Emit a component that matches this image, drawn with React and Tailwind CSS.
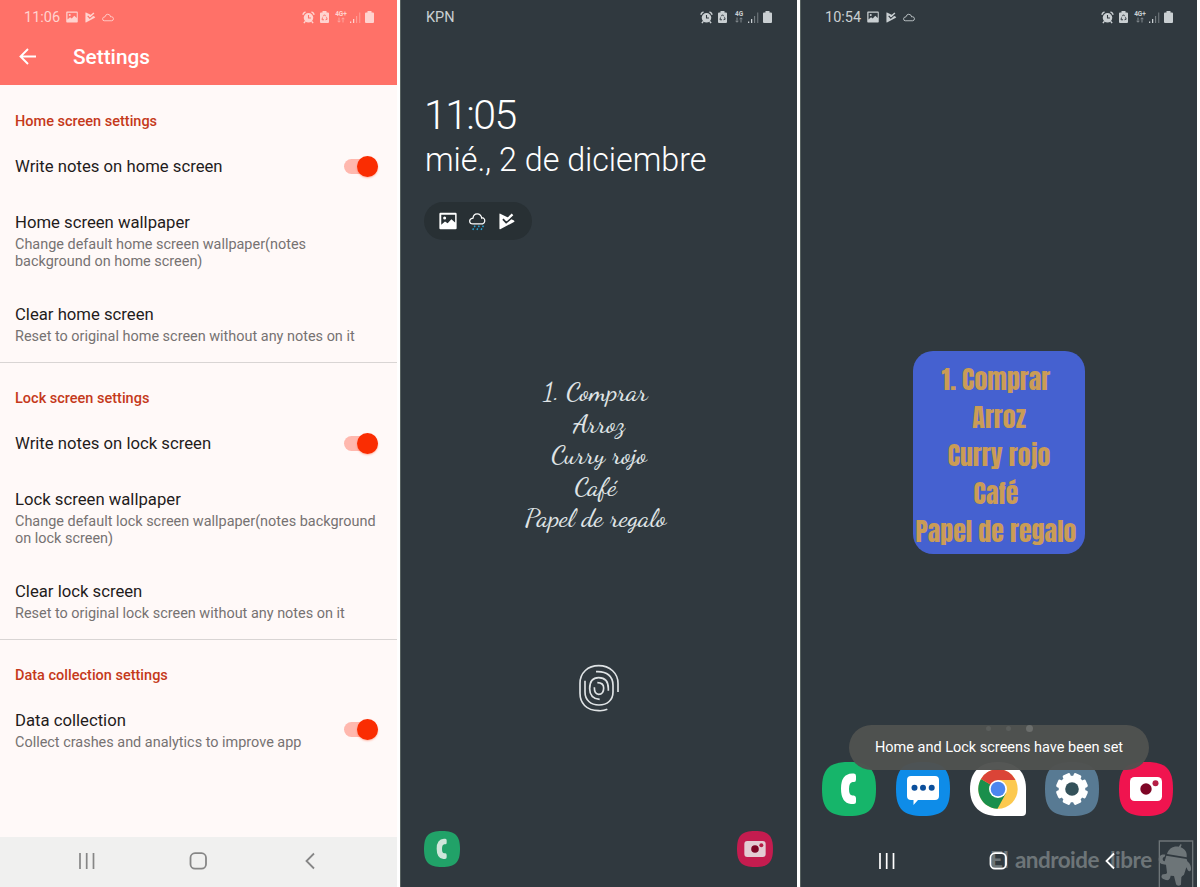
import React from "react";

function Picture({ className }) {
  return (
    <svg viewBox="0 0 24 24" className={className} fill="currentColor">
      <path fillRule="evenodd" d="M2 1H22Q23.500 1 23.500 2.500V21.500Q23.500 23 22 23H2Q.5 23 .5 21.500V2.500Q.5 1 2 1ZM3 3.500V17L8 12.500L11.500 15L16.500 9.500L21.500 14V3.500ZM7.500 6A2 2 0 1 1 7.500 10A2 2 0 1 1 7.500 6Z" />
    </svg>
  );
}

function PlayCheck({ className }) {
  return (
    <svg viewBox="0 0 24 24" className={className}>
      <path d="M2 1.500Q2 .5 3.200 1L22.500 10.500Q24 11.700 22.500 12.800L3.200 22.800Q2 23.200 2 22Z" fill="currentColor" />
      <path d="M7 8.500L11.500 13.500L24 2.500" fill="none" className="stroke-(--cut)" strokeWidth="2.600" />
      <path d="M10 7L12.500 9.500L20.500 2" fill="none" stroke="currentColor" strokeWidth="3.200" />
    </svg>
  );
}

function Cloud({ className }) {
  return (
    <svg viewBox="0 0 24 24" className={className} fill="none" stroke="currentColor" strokeWidth="1.600">
      <path d="M5 18H19A3.700 3.700 0 0 0 19 10.700Q17.500 10.500 17 11Q16 6 11.500 6Q7.500 6 6.500 10.700Q2 11 2 14.500Q2 18 5 18Z" />
    </svg>
  );
}

function RainCloud({ className }) {
  return (
    <svg viewBox="0 0 24 24" className={className} fill="none" stroke="currentColor" strokeWidth="1.500">
      <path d="M6 15.500H17.500A4 4 0 0 0 18.500 8.500Q17 8 16.500 8.500Q15.500 3.500 11 3.500Q6.500 3.500 6 8.500Q2 9 2 12Q2 15.500 6 15.500Z" />
      <path stroke="#2aa5d8" strokeWidth="1.700" strokeDasharray="2 1.800" d="M8.500 17.500L5.500 23M13.500 17.500L10.500 23M18.500 17.500L15.500 23" />
    </svg>
  );
}

function Alarm({ className }) {
  return (
    <svg viewBox="0 0 24 24" className={className} fill="none" stroke="currentColor">
      <circle cx="12" cy="12.500" r="8.800" fill="currentColor" stroke="none" />
      <path d="M1.500 7Q2.500 3 6.500 1.500M22.500 7Q21.500 3 17.500 1.500M6 19L3.500 22.500M18 19L20.500 22.500" strokeWidth="2.600" />
      <path className="stroke-(--cut)" d="M12 7.500V13H16.500" strokeWidth="2" />
    </svg>
  );
}

function BatterySaver({ className }) {
  return (
    <svg viewBox="0 0 18 24" className={className} fill="currentColor">
      <path d="M5 0H13V3H16Q18 3 18 5V22Q18 24 16 24H2Q0 24 0 22V5Q0 3 2 3H5Z" />
      <path className="stroke-(--cut)" fill="none" strokeWidth="1.900" d="M6.500 10.500L9 7.500L11.500 10.500M13 12.500L14.300 16.500L11 17.500M8 17.500H4L5 13" />
    </svg>
  );
}

function Signal({ className }) {
  return (
    <svg viewBox="0 0 22 22" className={className} fill="currentColor">
      <path d="M0 19H2.500V22H0ZM6 14H8.500V22H6Z" />
      <path opacity=".45" d="M12 8H14.300V22H12ZM18.500 1H20.500V22H18.500Z" />
    </svg>
  );
}

function Battery({ className }) {
  return (
    <svg viewBox="0 0 18 24" className={className} fill="currentColor">
      <path d="M5 0H13V3H16Q18 3 18 5V22Q18 24 16 24H2Q0 24 0 22V5Q0 3 2 3H5Z" />
    </svg>
  );
}

function Network({ label }) {
  return (
    <div className="flex w-[12px] flex-col items-center">
      <span className="text-[6.500px] leading-[6px] font-bold">{label}</span>
      <svg viewBox="0 0 16 12" className="h-[6px] w-[8px] opacity-60" fill="none" stroke="currentColor" strokeWidth="1.800">
        <path d="M4 1V10M1 7.500L4 10.500L7 7.500M12 11V2M9 4.500L12 1.500L15 4.500" />
      </svg>
    </div>
  );
}

function StatusBar({ label, icons, network, className }) {
  return (
    <div className={`flex h-[34px] shrink-0 items-center justify-between ${className}`}>
      <div className="flex items-center">
        <span className="w-[42px] pt-[2px] text-[14.500px] leading-4 whitespace-nowrap">{label}</span>
        {icons && (
          <>
            <Picture className="h-3 w-3" />
            <PlayCheck className="ml-[6px] h-[11px] w-3" />
            <Cloud className="ml-[5px] h-[13px] w-[14px]" />
          </>
        )}
      </div>
      <div className="flex items-center">
        <Alarm className="h-[13px] w-[13px]" />
        <BatterySaver className="ml-[5px] h-[12px] w-[9px]" />
        <span className="ml-[6px] flex"><Network label={network} /></span>
        <Signal className="ml-[3px] h-[11px] w-[11px]" />
        <Battery className="ml-1 h-[12px] w-[9px]" />
      </div>
    </div>
  );
}

function NavBar({ className }) {
  return (
    <div className={`flex h-[50px] shrink-0 items-center pb-[2px] ${className}`}>
      <svg viewBox="0 0 18 18" className="h-[18px] w-[18px]" fill="none" stroke="currentColor" strokeWidth="1.700">
        <path d="M2 1V17M8.700 1V17M15.500 1V17" />
      </svg>
      <svg viewBox="0 0 18 18" className="ml-[93px] h-[18px] w-[18px]" fill="none" stroke="currentColor" strokeWidth="1.800">
        <rect x="1.500" y="1.200" width="15.500" height="15.500" rx="4.500" />
      </svg>
      <svg viewBox="0 0 10 18" className="ml-[98px] h-[18px] w-[10px]" fill="none" stroke="currentColor" strokeWidth="1.800">
        <path d="M9 1.500L1.500 9L9 16.500" />
      </svg>
    </div>
  );
}

function Toggle() {
  return (
    <div className="-mt-[4px] flex h-[15px] w-[34px] items-center justify-end rounded-full bg-[#ffb8ae]">
      <div className="h-[21px] w-[21px] shrink-0 rounded-full bg-[#fa2d02] shadow-[0_1px_2px_rgba(251,48,0,0.35)]" />
    </div>
  );
}

function Row({ title, lines, toggle, className }) {
  return (
    <div className={`flex items-center justify-between pr-[19px] pl-[15px] ${className}`}>
      <div>
        <div className="mb-[3px] text-[16.700px] leading-[20px] whitespace-nowrap text-[#1f1c1c]">{title}</div>
        {lines && lines.map((l) => (
          <div key={l} className="text-[14.450px] leading-[17px] whitespace-nowrap text-[#767272]">{l}</div>
        ))}
      </div>
      {toggle && <Toggle />}
    </div>
  );
}

function Heading({ children, className }) {
  return <h2 className={`pl-[15px] text-[14.500px] leading-[20px] font-medium text-[#c5391b] ${className}`}>{children}</h2>;
}

function SettingsScreen() {
  return (
    <section className="flex h-full w-[397px] flex-col bg-[#fff9f8]">
      <header className="flex h-[85px] flex-col bg-[#ff7168] text-white [--cut:#ff7168]">
        <StatusBar label="11:06" icons network="4G+" className="pr-[23px] pl-[24px] text-[#ffd3cf]" />
        <div className="flex h-[46px] items-center">
          <svg viewBox="0 0 18 18" className="ml-[19px] h-[18px] w-[18px]" fill="none" stroke="currentColor" strokeWidth="1.900">
            <path d="M17 8.500H2M9 1L1.500 8.500L9 16" />
          </svg>
          <h1 className="ml-[36px] pt-[2px] text-[20.800px] font-medium">Settings</h1>
        </div>
      </header>
      <div className="flex h-[278px] flex-col border-b border-[#d9d5d4]">
        <Heading className="pt-[27px]">Home screen settings</Heading>
        <Row title="Write notes on home screen" toggle className="mt-[25px]" />
        <Row title="Home screen wallpaper" lines={["Change default home screen wallpaper(notes", "background on home screen)"]} className="mt-[33px]" />
        <Row title="Clear home screen" lines={["Reset to original home screen without any notes on it"]} className="mt-[35px]" />
      </div>
      <div className="flex h-[277px] flex-col border-b border-[#d9d5d4]">
        <Heading className="pt-[26px]">Lock screen settings</Heading>
        <Row title="Write notes on lock screen" toggle className="mt-[25px]" />
        <Row title="Lock screen wallpaper" lines={["Change default lock screen wallpaper(notes background", "on lock screen)"]} className="mt-[33px]" />
        <Row title="Clear lock screen" lines={["Reset to original lock screen without any notes on it"]} className="mt-[35px]" />
      </div>
      <div className="flex-1">
        <Heading className="pt-[26px]">Data collection settings</Heading>
        <Row title="Data collection" lines={["Collect crashes and analytics to improve app"]} toggle className="mt-[25px]" />
      </div>
      <NavBar className="bg-[#f0f0ef] pl-[78px] text-[#868686]" />
    </section>
  );
}

function Phone({ className }) {
  return (
    <svg viewBox="0 0 54 54" className={className}>
      <path d="M27 0C47 0 54 7 54 27S47 54 27 54S0 47 0 27S7 0 27 0Z" className="fill-(--tile)" />
      <path d="M30 11.500H32Q34 11.500 34 14V17.500Q34 20 32 20H30.500Q27 20.500 27 27T30.500 33.500H32Q34 34 34 36V39.500Q34 42 31.500 42H29Q19 41 19 26.500T30 11.500Z" className="fill-(--glyph)" />
    </svg>
  );
}

function Camera({ className }) {
  return (
    <svg viewBox="0 0 54 54" className={className}>
      <path d="M27 0C47 0 54 7 54 27S47 54 27 54S0 47 0 27S7 0 27 0Z" className="fill-(--tile)" />
      <rect x="11" y="15" width="32" height="24" rx="4.500" className="fill-(--glyph)" />
      <circle cx="27" cy="27" r="5.700" fill="#7e0526" />
      <circle cx="36.500" cy="21.300" r="3" fill="#b51d45" />
    </svg>
  );
}

function Messages() {
  return (
    <svg viewBox="0 0 54 54" className="h-[54px] w-[54px]">
      <path d="M27 0C47 0 54 7 54 27S47 54 27 54S0 47 0 27S7 0 27 0Z" fill="#0e8ce8" />
      <path d="M15 14H39Q43 14 43 18V34Q43 38 39 38H22L17.500 43V38H15Q11 38 11 34V18Q11 14 15 14Z" fill="#fff" />
      <g fill="#0b4f9c"><circle cx="18.500" cy="25.700" r="3" /><circle cx="27" cy="25.700" r="3" /><circle cx="35.700" cy="25.700" r="3" /></g>
    </svg>
  );
}

function Chrome() {
  return (
    <svg viewBox="0 0 56 54" className="h-[54px] w-[56px]">
      <path d="M28 0C46 0 56 10 56 27V50Q56 54 52 54H28C10 54 0 44 0 27S10 0 28 0Z" fill="#fff" />
      <circle cx="28" cy="27" r="19.700" fill="#fcc94f" />
      <path d="M28 27L11 17A19.700 19.700 0 0 0 27.500 46.700L35.800 31.500Z" fill="#1a8f4c" />
      <path d="M28 27L11 17A19.700 19.700 0 0 1 45.500 18H28Z" fill="#db4437" />
      <circle cx="28" cy="27" r="9" fill="#fff" />
      <circle cx="28" cy="27" r="7.300" fill="#4c86ee" />
    </svg>
  );
}

function Gear() {
  const teeth = [0, 45, 90, 135, 180, 225, 270, 315];
  return (
    <svg viewBox="0 0 54 54" className="h-[54px] w-[54px]">
      <path d="M27 0C47 0 54 7 54 27S47 54 27 54S0 47 0 27S7 0 27 0Z" fill="#587a93" />
      <circle cx="27" cy="27" r="13.300" fill="#fff" />
      {teeth.map((a) => (
        <rect key={a} x="23" y="11" width="8" height="8" rx="1.600" fill="#fff" transform={`rotate(${a + 22.5} 27 27)`} />
      ))}
      <circle cx="27" cy="27" r="6.800" fill="#34515a" />
    </svg>
  );
}

function LockScreen() {
  return (
    <section className="flex h-full w-[397px] flex-col border-l border-[#56605f] bg-[#30393f] [--cut:#30393f]">
      <StatusBar label="KPN" network="4G" className="pr-[25px] pl-[25px] text-[#c9cfd2]" />
      <div className="mt-[57px] pl-[23px] text-[41px] leading-[48px] font-light tracking-[-1.600px] text-white">11:05</div>
      <div className="pl-[24px] text-[32.300px] leading-[42px] font-light tracking-[-0.050px] whitespace-nowrap text-white">mié., 2 de diciembre</div>
      <div className="mt-[21px] ml-[23px] flex h-[38px] w-[108px] items-center rounded-full bg-[#283034] pl-[15px] text-white [--cut:#283034]">
        <Picture className="h-[18px] w-[18px]" />
        <RainCloud className="ml-[11px] h-[20px] w-[20px]" />
        <PlayCheck className="ml-[10px] h-[17px] w-[17px]" />
      </div>
      <div className="mt-[136px] flex flex-col items-center text-center font-['Dancing_Script',cursive] text-[26.500px] leading-[31.500px] font-medium text-[#dfe3e5]">
        <p>1. Comprar&nbsp;</p>
        <p>Arroz</p>
        <p>Curry rojo</p>
        <p>Café&nbsp;</p>
        <p>Papel de regalo&nbsp;</p>
      </div>
      <svg viewBox="0 0 240 240" className="mt-[116px] ml-[159px] h-[80px] w-[80px] shrink-0" fill="none" stroke="#dfe3e5" strokeWidth="5">
        <path d="M142 178Q130 183 116 182C78 182 60 158 60 130V100C60 68 84 47 116 47C150 47 174 70 174 100V126" />
        <path d="M108 65C142 63 159 80 159 106V126C159 150 142 165 117 165C92 165 75 150 75 126V92" />
        <path d="M119 148C98 146 89 134 89 116C89 94 98 83 116 83C136 83 145 96 145 116V122" />
        <path d="M103 112C103 128 108 133 116 133C127 133 131 125 131 114C131 104 125 98 112 98" />
      </svg>
      <div className="mt-auto mb-[20px] flex justify-between pr-[24px] pl-[23px] [--glyph:#cfe6da]">
        <Phone className="h-[36px] w-[36px] [--tile:#21a268]" />
        <Camera className="h-[36px] w-[36px] [--glyph:#e3ccd4] [--tile:#c41c4f]" />
      </div>
    </section>
  );
}

function Watermark() {
  return (
    <div className="absolute right-[3px] bottom-0 flex h-[48px] items-center text-[#7d8487] opacity-80">
      <div className="flex w-[168px] pb-[7px] font-[Lato,sans-serif] text-[22.500px] leading-6 font-bold whitespace-nowrap">
        <span className="w-[25px] font-black">El</span>
        <span className="w-[95px] tracking-[-0.550px]">androide</span>
        <span className="tracking-[-0.500px]">libre</span>
      </div>
      <svg viewBox="0 0 108 141" className="mt-px h-[47px] w-[36px]" fill="currentColor">
        <path d="M4 141V3H104V141" fill="none" stroke="currentColor" strokeWidth="4" />
        <path d="M27 42C32 24 48 17 62 20L68 12L71 14L68 22C82 28 88 38 86 52Z" />
        <path d="M25 47L86 57L88 64C98 72 100 82 99 90C96 96 89 94 88 88L85 82L78 104C74 108 71 108 70 112L69 134C64 139 56 138 54 132L48 108L38 107C37 116 32 122 24 120C12 118 6 110 14 103C20 101 25 104 27 98L24 74C12 74 2 70 2 58C2 46 12 42 22 44L20 50C12 52 12 62 20 64Z" />
      </svg>
    </div>
  );
}

function HomeScreen() {
  return (
    <section className="relative flex h-full w-[397px] flex-col border-l border-[#56605f] bg-[#30393f] [--cut:#30393f]">
      <StatusBar label="10:54" icons network="4G+" className="pr-[24px] pl-[24px] text-[#c9cfd2]" />
      <div className="mt-[317px] ml-[112px] flex h-[203px] w-[172px] flex-col items-center rounded-[20px] bg-[#4561d0] pt-[10px] font-[Anton,Roboto,sans-serif] text-[25.900px] leading-[38px] text-[#ca9c56]">
        <p className="whitespace-nowrap">1. Comprar&nbsp;</p>
        <p className="whitespace-nowrap">Arroz</p>
        <p className="whitespace-nowrap">Curry rojo</p>
        <p className="whitespace-nowrap">Café&nbsp;</p>
        <p className="whitespace-nowrap">Papel de regalo&nbsp;</p>
      </div>
      <div className="mt-auto flex pb-[21px] pl-[21px] [--glyph:#fff]">
        <Phone className="h-[54px] w-[54px] [--tile:#16b56a]" />
        <span className="ml-[20px]"><Messages /></span>
        <span className="ml-[20px]"><Chrome /></span>
        <span className="ml-[19px]"><Gear /></span>
        <Camera className="ml-[20px] h-[54px] w-[54px] [--tile:#f0144f]" />
      </div>
      <div className="absolute top-[725px] left-[48px] flex h-[45px] w-[300px] items-center justify-center rounded-full bg-[#50524f]/97 text-[14.500px] whitespace-nowrap text-white">
        <span className="absolute top-px left-[137px] h-[5px] w-[5px] rounded-full bg-[#5b5e5c]" />
        <span className="absolute top-px left-[157px] h-[5px] w-[5px] rounded-full bg-[#5b5e5c]" />
        <span className="absolute top-0 left-[177px] h-[7px] w-[7px] rounded-full bg-[#6b6e6c]" />
        Home and Lock screens have been set
      </div>
      <Watermark />
      <NavBar className="relative pl-[77px] text-white" />
    </section>
  );
}

export default function App() {
  return (
    <main className="flex h-[887px] w-[1200px] gap-[3px] overflow-hidden bg-white font-[Roboto,sans-serif]">
      <SettingsScreen />
      <LockScreen />
      <HomeScreen />
    </main>
  );
}
